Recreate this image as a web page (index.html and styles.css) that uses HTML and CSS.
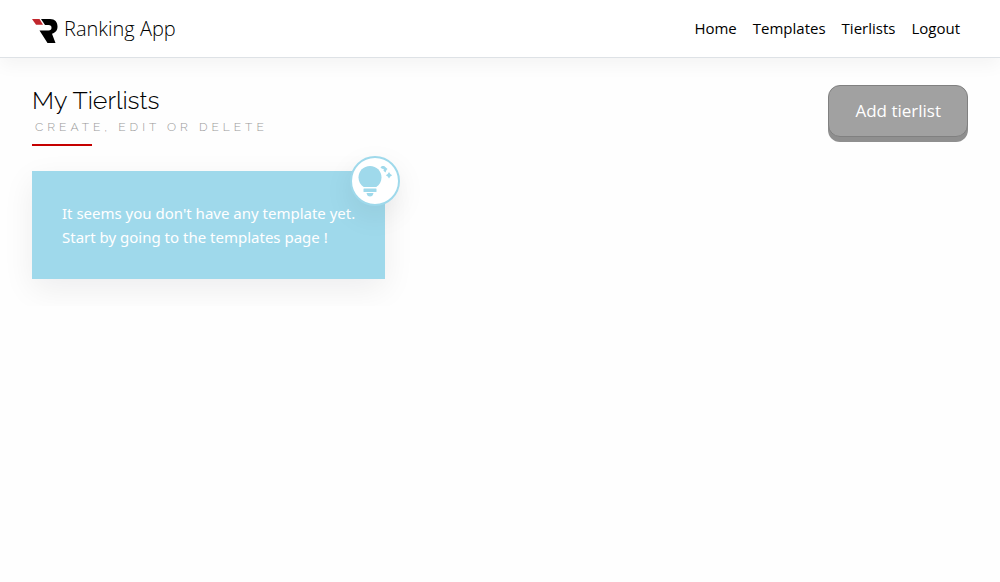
FILE: index.html
```html
<!DOCTYPE html>
<html lang="en">
<head>
<meta charset="utf-8">
<title>Ranking App</title>
<link rel="stylesheet" href="styles.css">
</head>
<body>
<header class="navbar">
  <a class="brand" href="#">
    <svg class="logo" viewBox="0 0 26 26" aria-hidden="true">
      <path fill="#c1272d" d="M0 1H7.500L11 6.800H4Z"/>
      <path d="M9 1H18C23 1 25.500 4 25.500 8.500C25.500 12 24 14.500 20 15.800L23.500 25H15.500L7.500 12.500H16.500C18.500 12.500 19.500 11.500 19.500 9.800C19.500 8 18.500 7 16.500 7H13Z"/>
    </svg>
    <span>Ranking App</span>
  </a>
  <nav class="links">
    <a href="#">Home</a>
    <a href="#">Templates</a>
    <a href="#">Tierlists</a>
    <a href="#">Logout</a>
  </nav>
</header>
<main class="page">
  <div class="page-head">
    <div class="heading">
      <h1 class="title">My Tierlists</h1>
      <p class="subtitle">Create, edit or delete</p>
    </div>
    <button class="add" type="button">Add tierlist</button>
  </div>
  <section class="notice">
    <p class="notice-text">It seems you don't have any template yet.<br>Start by going to the templates page !</p>
    <span class="badge">
      <svg class="bulb" viewBox="0 0 46 46" aria-hidden="true">
        <path d="M18 8C24.500 8 29.500 13 29.500 19.300C29.500 23.500 27.500 27 24.300 29H11.700C8.500 27 6.500 23.500 6.500 19.300C6.500 13 11.500 8 18 8Z"/>
        <rect x="11.500" y="30.500" width="13" height="3.500" rx=".5"/>
        <path d="M14.500 35H21.500C21 37.500 20 38.500 18 38.500C16 38.500 15 37.500 14.500 35Z"/>
        <path d="M28.500 9.500C29.500 8 31 7.800 32.500 8.300L35.500 11L34.500 12L33.500 14.500L31.500 12.800L31.800 11L30 10.800Z"/>
        <path d="M37 14L38.300 15.900L40.200 17.200L38.300 18.500L37 20.400L35.700 18.500L33.800 17.200L35.700 15.900Z"/>
      </svg>
    </span>
  </section>
</main>
</body>
</html>
```
FILE: styles.css
```css
* {
  box-sizing: border-box;
}

body {
  margin: 0;
  background: #fefefe;
  color: #000;
  font-family: "Segoe UI", "Open Sans", "Noto Sans", sans-serif;
  font-size: 15px;
  line-height: 24px;
}

h1,
p {
  margin: 0;
  font-weight: 400;
}

a {
  color: inherit;
  text-decoration: none;
}

.navbar {
  display: flex;
  align-items: center;
  justify-content: space-between;
  padding: 14px 40px 13px 32px;
  background: #fff;
  border-bottom: 1px solid #dee2e6;
  box-shadow: 0 8px 16px rgba(0, 0, 0, 0.04);
}

.brand {
  display: flex;
  align-items: center;
  gap: 6px;
  font-size: 20px;
  font-weight: 300;
  line-height: 30px;
}

.logo {
  width: 26px;
  height: 26px;
  margin-top: 4px;
}

.links {
  display: flex;
  gap: 16px;
  padding-bottom: 2px;
}

.page {
  padding: 27px 32px;
}

.page-head {
  display: flex;
  align-items: flex-start;
  justify-content: space-between;
}

.title {
  font-family: Raleway, Lato, sans-serif;
  font-size: 25px;
  font-weight: 300;
  line-height: 30px;
}

.subtitle {
  padding-left: 3px;
  color: #999;
  font-family: Raleway, Lato, sans-serif;
  font-size: 12px;
  font-weight: 300;
  letter-spacing: 4px;
  line-height: 24px;
  text-transform: uppercase;
}

.heading::after {
  content: "";
  display: block;
  width: 60px;
  height: 2px;
  margin-top: 5px;
  background: #c50000;
}

.add {
  padding: 13px 26px;
  border: 1px solid #808080;
  border-radius: 12px;
  background: #a1a1a1;
  box-shadow: 0 5px 0 #8f8f8f;
  color: #fff;
  font: inherit;
  font-size: 17px;
  line-height: 24px;
}

.notice {
  position: relative;
  width: fit-content;
  margin-top: 25px;
  padding: 30px;
  background: #9fd9eb;
  box-shadow: 0 10px 30px rgba(0, 10, 30, 0.07);
  color: #fff;
}

.notice-text {
  font-family: "Segoe UI", "Noto Sans", sans-serif;
}

.badge {
  position: absolute;
  top: -15px;
  right: -15px;
  width: 50px;
  height: 50px;
  border: 2px solid #9fd9eb;
  border-radius: 50%;
  background: #fff;
  box-shadow: 0 10px 30px rgba(0, 10, 30, 0.07);
}

.bulb {
  display: block;
  fill: #9fd9eb;
}
```
